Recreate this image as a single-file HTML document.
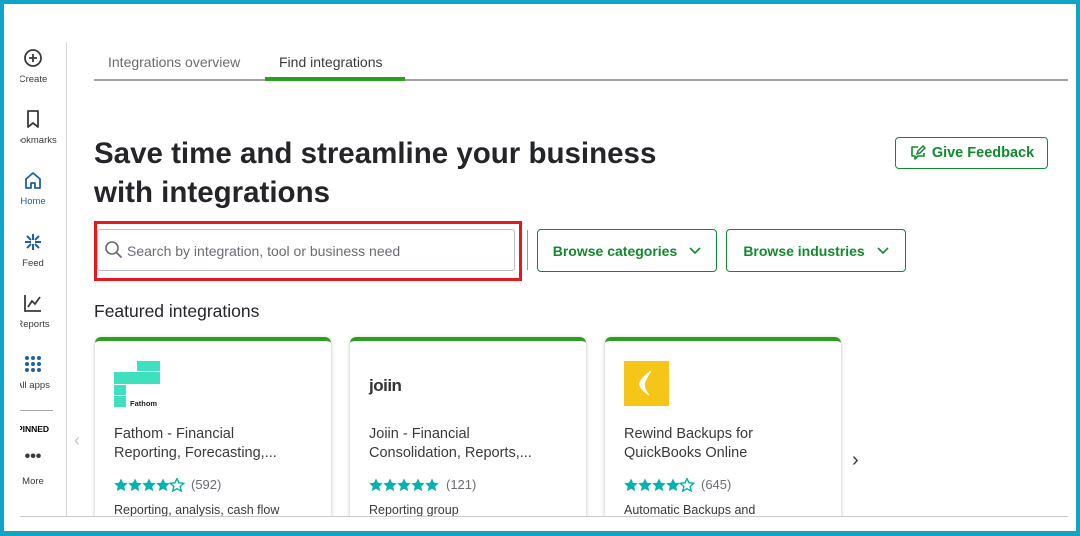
<!DOCTYPE html>
<html><head><style>
*{box-sizing:border-box;margin:0;padding:0}
body{width:1080px;height:536px;overflow:hidden;background:#fff;font-family:"Liberation Sans",sans-serif;position:relative;color:#393a3d}
.a{position:absolute}
.frame{position:absolute;left:0;top:0;width:1080px;height:536px;border:4px solid #0ea5c9;border-bottom-width:5px;z-index:10;pointer-events:none}
.nav{position:absolute;left:0;width:66px;text-align:center;font-size:9.5px;color:#393a3d;clip-path:inset(0 0 0 20px)}
.nav svg{display:block;margin:0 auto 6px}
.card{position:absolute;top:337px;width:236px;height:190px;background:#fff;border-radius:6px;border-top:4px solid #2ca01c;box-shadow:0 1px 4px rgba(0,0,0,.25)}
.card .t{position:absolute;left:19px;top:84px;font-size:14.5px;line-height:19px;color:#393a3d}
.card .r{position:absolute;left:19px;top:136px;font-size:13px;color:#6b6c72;display:flex;align-items:center}
.card .r svg{margin-right:5px}
.card .d{position:absolute;left:19px;top:162px;font-size:12.5px;color:#393a3d}
.btn{position:absolute;border:1px solid #108a2c;border-radius:4px;color:#108a2c;font-weight:bold;font-size:14px;display:flex;align-items:center;justify-content:center}
</style></head><body>
<svg width="0" height="0" style="position:absolute"><defs>
<path id="st" d="M7 0.5l2 4.3 4.7.5-3.5 3.2 1 4.6L7 10.7 2.8 13.1l1-4.6L.3 5.3 5 4.8z"/>
</defs></svg>
<div class="frame"></div>
<div class="a" style="left:66px;top:42px;width:1px;height:474px;background:#d4d7dc"></div>
<div class="nav" style="top:48px"><svg width="20" height="20" viewBox="0 0 20 20"><circle cx="10" cy="10" r="8" fill="none" stroke="#393a3d" stroke-width="1.8"/><path d="M10 6v8M6 10h8" stroke="#393a3d" stroke-width="1.8"/></svg>Create</div>
<div class="nav" style="top:109px"><svg width="20" height="20" viewBox="0 0 20 20"><path d="M5 2h10v16l-5-4-5 4z" fill="none" stroke="#393a3d" stroke-width="1.8" stroke-linejoin="round"/></svg>Bookmarks</div>
<div class="nav" style="top:170px;color:#1f5fa8"><svg width="20" height="20" viewBox="0 0 20 20"><path d="M3 9l7-6 7 6v9h-5v-5h-4v5H3z" fill="none" stroke="#1f5fa8" stroke-width="1.8" stroke-linejoin="round"/></svg>Home</div>
<div class="nav" style="top:232px"><svg width="20" height="20" viewBox="0 0 20 20"><path d="M10 2v6M10 12v6M2 10h6M12 10h6M4 4l4 4M12 12l4 4M16 4l-4 4M8 12l-4 4" stroke="#1f5fa8" stroke-width="2"/></svg>Feed</div>
<div class="nav" style="top:293px"><svg width="20" height="20" viewBox="0 0 20 20"><path d="M2 2v16h16M5 14l4-6 3 3 5-7" fill="none" stroke="#393a3d" stroke-width="1.8"/></svg>Reports</div>
<div class="nav" style="top:354px"><svg width="20" height="20" viewBox="0 0 20 20" fill="#1f5fa8"><circle cx="4" cy="4" r="2"/><circle cx="10" cy="4" r="2"/><circle cx="16" cy="4" r="2"/><circle cx="4" cy="10" r="2"/><circle cx="10" cy="10" r="2"/><circle cx="16" cy="10" r="2"/><circle cx="4" cy="16" r="2"/><circle cx="10" cy="16" r="2"/><circle cx="16" cy="16" r="2"/></svg>All apps</div>
<div class="a" style="left:20px;top:410px;width:33px;height:1px;background:#aaa"></div>
<div class="nav" style="top:424px;font-weight:bold;font-size:8.5px;color:#000">PINNED</div>
<div class="nav" style="top:450px"><div style="font-size:16px;font-weight:bold;line-height:14px;margin-bottom:12px">•••</div>More</div>
<div class="a" style="left:108px;top:54px;font-size:14px;color:#6b6c72">Integrations overview</div>
<div class="a" style="left:279px;top:54px;font-size:14px;color:#393a3d">Find integrations</div>
<div class="a" style="left:94px;top:79px;width:974px;height:2px;background:#a0a2a6"></div>
<div class="a" style="left:265px;top:77px;width:140px;height:4px;background:#2ca01c"></div>
<div class="a" style="left:94px;top:134px;font-size:29.5px;font-weight:bold;line-height:39px;color:#242529">Save time and streamline your business<br>with integrations</div>
<div class="btn" style="left:895px;top:137px;width:153px;height:32px;font-size:14.5px"><svg width="18" height="18" viewBox="0 0 18 18" style="margin-right:5px"><path d="M9 3H3v9h3v3l3-3h6V9" fill="none" stroke="#108a2c" stroke-width="1.6" stroke-linejoin="round"/><path d="M8 10l1-3 5-5 2 2-5 5z" fill="none" stroke="#108a2c" stroke-width="1.5"/></svg>Give Feedback</div>
<div class="a" style="left:94px;top:221px;width:428px;height:60px;border:3px solid #e4191f"></div>
<div class="a" style="left:97px;top:229px;width:418px;height:42px;border:1px solid #babec5;border-radius:3px"></div>
<svg class="a" style="left:104px;top:240px" width="20" height="20" viewBox="0 0 20 20"><circle cx="8" cy="8" r="6" fill="none" stroke="#6b6c72" stroke-width="1.6"/><path d="M12.5 12.5l5 5" stroke="#6b6c72" stroke-width="1.8"/></svg>
<div class="a" style="left:127px;top:243px;font-size:14px;color:#6b6c72">Search by integration, tool or business need</div>
<div class="a" style="left:527px;top:230px;width:1px;height:40px;background:#999"></div>
<div class="btn" style="left:537px;top:229px;width:180px;height:43px">Browse categories<svg width="12" height="8" viewBox="0 0 12 8" style="margin-left:12px"><path d="M1 1l5 5 5-5" fill="none" stroke="#108a2c" stroke-width="1.6"/></svg></div>
<div class="btn" style="left:726px;top:229px;width:180px;height:43px">Browse industries<svg width="12" height="8" viewBox="0 0 12 8" style="margin-left:12px"><path d="M1 1l5 5 5-5" fill="none" stroke="#108a2c" stroke-width="1.6"/></svg></div>
<div class="a" style="left:94px;top:301px;font-size:17.5px;color:#242529">Featured integrations</div>
<div class="a" style="left:74px;top:430px;font-size:18px;color:#c4c6ca">‹</div>
<div class="a" style="left:852px;top:449px;font-size:20px;color:#393a3d">›</div>
<div class="card" style="left:95px">
<svg class="a" style="left:19px;top:20px" width="46" height="46" viewBox="0 0 46 46"><rect x="23" y="0" width="23" height="10" fill="#3ee0c0"/><rect x="0" y="11" width="46" height="12" fill="#3ee0c0"/><rect x="0" y="24" width="12" height="10" fill="#3ee0c0"/><rect x="0" y="35" width="12" height="11" fill="#3ee0c0"/><text x="16" y="45" font-size="7.5" font-weight="bold" fill="#222" font-family="Liberation Sans">Fathom</text></svg>
<div class="t">Fathom - Financial<br>Reporting, Forecasting,...</div>
<div class="r"><svg width="72" height="14" viewBox="0 0 72 14" fill="#00b2b0"><use href="#st"/><use href="#st" x="14"/><use href="#st" x="28"/><use href="#st" x="42"/><use href="#st" x="56" fill="none" stroke="#00b2b0" stroke-width="1.4"/></svg>(592)</div>
<div class="d">Reporting, analysis, cash flow</div></div>
<div class="card" style="left:350px">
<div class="a" style="left:19px;top:35px;font-size:17px;font-weight:bold;color:#333;letter-spacing:-0.5px">joiin</div>
<div class="t">Joiin - Financial<br>Consolidation, Reports,...</div>
<div class="r"><svg width="72" height="14" viewBox="0 0 72 14" fill="#00b2b0"><use href="#st"/><use href="#st" x="14"/><use href="#st" x="28"/><use href="#st" x="42"/><use href="#st" x="56"/></svg>(121)</div>
<div class="d">Reporting group</div></div>
<div class="card" style="left:605px">
<svg class="a" style="left:19px;top:20px" width="45" height="45" viewBox="0 0 45 45"><rect width="45" height="45" fill="#f5c518"/><path d="M28 9c-8 5-13 11-13 14 0 3 5 9 11 12-3-4-6-9-5-12 1-5 4-9 7-14z" fill="#fff"/></svg>
<div class="t">Rewind Backups for<br>QuickBooks Online</div>
<div class="r"><svg width="72" height="14" viewBox="0 0 72 14" fill="#00b2b0"><use href="#st"/><use href="#st" x="14"/><use href="#st" x="28"/><use href="#st" x="42"/><use href="#st" x="56" fill="none" stroke="#00b2b0" stroke-width="1.4"/></svg>(645)</div>
<div class="d">Automatic Backups and</div></div>
<div class="a" style="left:20px;top:516px;width:1048px;height:1px;background:#c8cacd"></div>
<div class="a" style="left:4px;top:517px;width:1072px;height:14px;background:#fff"></div>
</body></html>
